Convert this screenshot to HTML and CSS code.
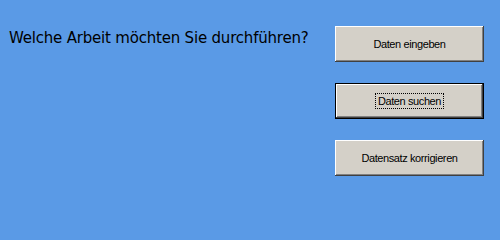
FILE: index.html
```html
<!DOCTYPE html>
<html lang="de">
<head>
<meta charset="utf-8">
<link rel="stylesheet" href="styles.css">
</head>
<body>
<main class="screen">
  <h1 class="question">Welche Arbeit möchten Sie durchführen?</h1>
  <div class="actions">
    <button class="btn" type="button">Daten eingeben</button>
    <button class="btn btn-default" type="button"><span class="focus">Daten suchen</span></button>
    <button class="btn" type="button">Datensatz korrigieren</button>
  </div>
</main>
</body>
</html>
```

FILE: styles.css
```css
html, body {
  margin: 0;
  padding: 0;
}
body {
  width: 500px;
  height: 200px;
  background: #5a9ae6;
  overflow: hidden;
}
.screen {
  display: flex;
  justify-content: space-between;
  align-items: flex-start;
  padding: 26px 16px 0 9px;
}
.question {
  margin: 2px 0 0 0;
  font-family: "DejaVu Sans", sans-serif;
  font-weight: normal;
  font-size: 15px;
  line-height: 20px;
  color: #000;
  letter-spacing: -0.2px;
}
.actions {
  display: flex;
  flex-direction: column;
  gap: 21px;
}
.btn {
  box-sizing: border-box;
  width: 149px;
  height: 36px;
  margin: 0;
  padding: 0;
  background: #d4d0c8;
  font-family: "Liberation Sans", Arial, sans-serif;
  font-size: 11px;
  letter-spacing: -0.4px;
  color: #000;
  border: none;
  box-shadow:
    inset -1px -1px 0 #404040,
    inset 1px 1px 0 #ffffff,
    inset -2px -2px 0 #808080;
}
.btn-default {
  box-shadow:
    inset -1px -1px 0 #000,
    inset 1px 1px 0 #000,
    inset -2px -2px 0 #404040,
    inset 2px 2px 0 #ffffff,
    inset -3px -3px 0 #808080;
}
.focus {
  outline: 1px dotted #000;
  outline-offset: 1px;
  padding: 0 1px;
}
```
